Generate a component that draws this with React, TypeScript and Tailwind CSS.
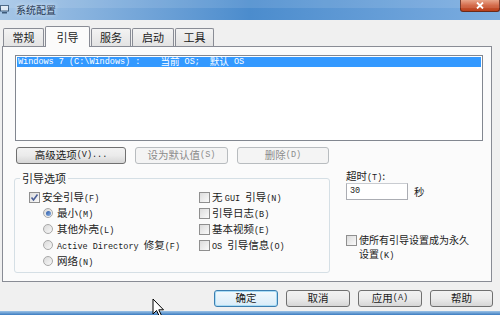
import React from "react";

const CJK = "font-['Noto_Sans_CJK_SC','Noto_Sans',sans-serif]";

function M({ children }: { children: React.ReactNode }) {
  return <span className="font-['Liberation_Mono',monospace] text-[8.5px]">{children}</span>;
}

function CheckBox({ checked = false }: { checked?: boolean }) {
  return (
    <div className="w-[11px] h-[11px] shrink-0 border border-[#8f8f8f] bg-gradient-to-br from-[#dcdcdc] to-[#fafafa] flex items-center justify-center">
      {checked && (
        <svg width="9" height="9" viewBox="0 0 9 9">
          <path d="M1.5 4.5 L3.5 7 L7.5 1.5" fill="none" stroke="#4a5f97" strokeWidth="1.6" />
        </svg>
      )}
    </div>
  );
}

function Radio({ checked = false }: { checked?: boolean }) {
  return (
    <div className="w-[10px] h-[10px] shrink-0 rounded-full border border-[#a8a8a8] bg-gradient-to-br from-[#dadada] to-[#f8f8f8] flex items-center justify-center">
      {checked && <div className="w-[5px] h-[5px] rounded-full bg-gradient-to-br from-[#2a58a6] to-[#8fb4e5]" />}
    </div>
  );
}

function Btn({
  children,
  w,
  disabled = false,
  primary = false,
}: {
  children: React.ReactNode;
  w: string;
  disabled?: boolean;
  primary?: boolean;
}) {
  const base =
    "h-[17px] rounded-[3px] border flex items-center justify-center text-[10.5px] leading-none shrink-0 " + w;
  if (disabled)
    return <div className={base + " border-[#b8bcbf] bg-[#f4f4f4] text-[#8b8b8b]"}>{children}</div>;
  if (primary)
    return (
      <div className={base + " border-[#3c7fb1] bg-gradient-to-b from-[#f2f9fd] to-[#d9ecf8] text-[#1a1a1a] shadow-[inset_0_0_0_1px_#a9dcf5]"}>
        {children}
      </div>
    );
  return (
    <div className={base + " border-[#707070] bg-gradient-to-b from-[#f2f2f2] via-[#ebebeb] to-[#d6d6d6] text-[#1a1a1a]"}>
      {children}
    </div>
  );
}

function Tab({ label, active = false, w }: { label: string; active?: boolean; w: string }) {
  if (active)
    return (
      <div className={"h-[21px] -mb-[1px] border border-b-0 border-[#898c95] bg-[#fbfbfb] rounded-t-[2px] flex items-center justify-center text-[11px] relative z-10 " + w}>
        {label}
      </div>
    );
  return (
    <div className={"h-[18px] border border-b-0 border-[#898c95] bg-gradient-to-b from-[#f3f3f3] to-[#e3e3e3] rounded-t-[2px] flex items-center justify-center text-[11px] " + w}>
      {label}
    </div>
  );
}

export default function App() {
  return (
    <div className={"w-[500px] h-[315px] bg-[#f0f0f0] flex flex-col relative overflow-hidden text-[#1a1a1a] " + CJK}>
      {/* Title bar */}
      <div className="h-[20px] shrink-0 bg-gradient-to-r from-[#a6c6e6] via-[#4b8ccd] to-[#7cade0] flex items-start relative">
        <div className="absolute inset-x-0 top-0 h-[8px] bg-white/10" />
        <svg width="10" height="9" viewBox="0 0 10 9" className="mt-[5px] ml-[0px] shrink-0">
          <rect x="0.5" y="0.5" width="8" height="5.5" fill="#dfe9f3" stroke="#3d5a7a" />
          <rect x="2" y="7" width="5" height="1.5" fill="#3d5a7a" />
        </svg>
        <span className="ml-[6px] mt-[4px] text-[10px] leading-[12px] text-[#1f3550] [text-shadow:0_0_4px_#e6f0fa]">系统配置</span>
        <div className="ml-auto w-[40px] h-[12px] rounded-b-[3px] border border-t-0 border-[#6b2a1a] bg-gradient-to-b from-[#e59a7c] via-[#cf5a36] to-[#b7401c] flex items-center justify-center">
          <svg width="8" height="7" viewBox="0 0 8 7">
            <path d="M1 0.5 L7 6.5 M7 0.5 L1 6.5" stroke="#ffffff" strokeWidth="1.8" />
          </svg>
        </div>
      </div>

      {/* Body */}
      <div className="flex flex-col px-[2px] pt-[6px]">
        {/* Tabs */}
        <div className="h-[20px] flex items-end gap-[1px] pl-[1px]">
          <Tab label="常规" w="w-[41px]" />
          <Tab label="引导" w="w-[45px]" active />
          <Tab label="服务" w="w-[40px]" />
          <Tab label="启动" w="w-[42px]" />
          <Tab label="工具" w="w-[39px]" />
        </div>

        {/* Panel */}
        <div className="w-[490px] h-[236px] border border-[#898c95] bg-[#fbfbfb] flex flex-col pl-[12px] pt-[8px]">
          {/* Listbox */}
          <div className="w-[468px] h-[86px] border border-[#828790] bg-white p-[1px]">
            <div className="h-[10px] bg-[#3399ff] text-white flex items-center pl-[1px] leading-none whitespace-nowrap">
              <M>Windows 7 (C:\Windows) :</M>
              <span className="text-[9.5px] ml-[20px]">当前</span>
              <M>&nbsp;OS;</M>
              <span className="text-[9.5px] ml-[10px]">默认</span>
              <M>&nbsp;OS</M>
            </div>
          </div>

          {/* Buttons row */}
          <div className="flex gap-[9px] mt-[6px] ml-[1px]">
            <Btn w="w-[110px]">高级选项<M>(V)...</M></Btn>
            <Btn w="w-[93px]" disabled>设为默认值<M>(S)</M></Btn>
            <Btn w="w-[92px]" disabled>删除<M>(D)</M></Btn>
          </div>

          {/* Lower section */}
          <div className="flex">
            {/* Group box */}
            <div className="relative -ml-[1px] mt-[14px] w-[316px] h-[95px] border border-[#d5dfe5] rounded-[3px]">
              <span className="absolute -top-[8px] left-[5px] px-[2px] bg-[#fbfbfb] text-[11px] leading-[14px]">引导选项</span>
              <div className="flex pt-[10px] pl-[14px] text-[10.5px]">
                <div className="w-[170px] flex flex-col">
                  <div className="h-[16px] flex items-center gap-[2px]">
                    <CheckBox checked />
                    <span>安全引导<M>(F)</M></span>
                  </div>
                  <div className="h-[16px] flex items-center gap-[4px] pl-[14px]">
                    <Radio checked />
                    <span>最小<M>(M)</M></span>
                  </div>
                  <div className="h-[16px] flex items-center gap-[4px] pl-[14px]">
                    <Radio />
                    <span>其他外壳<M>(L)</M></span>
                  </div>
                  <div className="h-[16px] flex items-center gap-[4px] pl-[14px]">
                    <Radio />
                    <span className="whitespace-nowrap"><M>Active Directory </M>修复<M>(F)</M></span>
                  </div>
                  <div className="h-[16px] flex items-center gap-[4px] pl-[14px]">
                    <Radio />
                    <span>网络<M>(N)</M></span>
                  </div>
                </div>
                <div className="flex flex-col">
                  <div className="h-[16px] flex items-center gap-[2px]">
                    <CheckBox />
                    <span className="whitespace-nowrap">无 <M>GUI </M>引导<M>(N)</M></span>
                  </div>
                  <div className="h-[16px] flex items-center gap-[2px]">
                    <CheckBox />
                    <span>引导日志<M>(B)</M></span>
                  </div>
                  <div className="h-[16px] flex items-center gap-[2px]">
                    <CheckBox />
                    <span>基本视频<M>(E)</M></span>
                  </div>
                  <div className="h-[16px] flex items-center gap-[2px]">
                    <CheckBox />
                    <span className="whitespace-nowrap"><M>OS </M>引导信息<M>(O)</M></span>
                  </div>
                </div>
              </div>
            </div>

            {/* Right column */}
            <div className="ml-[16px] pt-[6px] flex flex-col text-[10.5px]">
              <div className="h-[12px] leading-[12px]">超时<M>(T)</M>:</div>
              <div className="flex items-center mt-[1px]">
                <div className="w-[62px] h-[17px] border border-[#abadb3] border-t-[#c9ccd1] bg-white flex items-center pl-[3px]">
                  <M>30</M>
                </div>
                <span className="ml-[6px]">秒</span>
              </div>
              <div className="flex items-start mt-[32px] gap-[2px]">
                <div className="mt-[3px]">
                  <CheckBox />
                </div>
                <div className="flex flex-col text-[10px] leading-[15px]">
                  <div className="h-[15px] whitespace-nowrap">使所有引导设置成为永久</div>
                  <div className="h-[15px] -mt-[1px] whitespace-nowrap">设置<M>(K)</M></div>
                </div>
              </div>
            </div>
          </div>
        </div>

        {/* Bottom buttons */}
        <div className="flex justify-end gap-[8px] mt-[8px] pr-[5px]">
          <Btn w="w-[64px]" primary>确定</Btn>
          <Btn w="w-[64px]">取消</Btn>
          <Btn w="w-[64px]">应用<M>(A)</M></Btn>
          <Btn w="w-[63px]">帮助</Btn>
        </div>
      </div>

      <div className="flex-1" />
      <div className="h-[4px] shrink-0 bg-gradient-to-b from-[#9cc3e6] to-[#3b7cc0]" />

      {/* Mouse cursor */}
      <svg className="absolute left-[152px] top-[298px]" width="13" height="20" viewBox="0 0 13 20">
        <path d="M1 1 L1 16 L4.5 12.5 L7.5 18.5 L9.5 17.5 L6.8 11.8 L11.5 11.8 Z" fill="#ffffff" stroke="#000000" strokeWidth="1" strokeLinejoin="round" />
      </svg>
    </div>
  );
}
